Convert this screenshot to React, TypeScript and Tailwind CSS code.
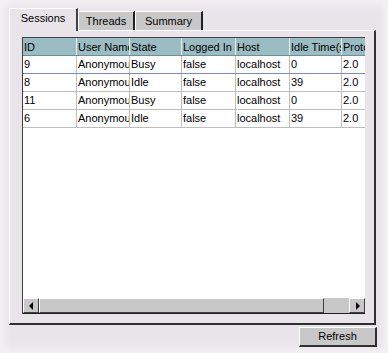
import React from "react";

const cols = [
  { name: "ID", w: "w-[54px]" },
  { name: "User Name", w: "w-[53px]" },
  { name: "State", w: "w-[52px]" },
  { name: "Logged In", w: "w-[54px]" },
  { name: "Host", w: "w-[54px]" },
  { name: "Idle Time(s)", w: "w-[52px]" },
  { name: "Protocol", w: "w-[40px]" },
];

const rows = [
  ["9", "Anonymous", "Busy", "false", "localhost", "0", "2.0"],
  ["8", "Anonymous", "Idle", "false", "localhost", "39", "2.0"],
  ["11", "Anonymous", "Busy", "false", "localhost", "0", "2.0"],
  ["6", "Anonymous", "Idle", "false", "localhost", "39", "2.0"],
];

function Tab({ label, active, w }: { label: string; active?: boolean; w: string }) {
  return active ? (
    <div
      className={`${w} h-[23px] bg-[#e9e4e9] border-l border-t border-white border-r-2 border-r-[#404040] flex items-center justify-center relative z-10 -mb-px`}
    >
      <span className="-mt-[3px]">{label}</span>
    </div>
  ) : (
    <div
      className={`${w} h-[19px] mt-[3px] bg-[#c8c8c8] border-l border-t border-white border-r-2 border-r-[#202020] flex items-center justify-center`}
    >
      {label}
    </div>
  );
}

function ArrowBtn({ dir }: { dir: "l" | "r" }) {
  return (
    <div className="w-[16px] h-full bg-[#c8c8c8] border-t border-l border-white border-r border-b border-r-[#404040] border-b-[#404040] flex items-center justify-center">
      <svg width="5" height="8" viewBox="0 0 5 8">
        {dir === "l" ? <polygon points="4,0 4,8 0,4" fill="#000" /> : <polygon points="1,0 1,8 5,4" fill="#000" />}
      </svg>
    </div>
  );
}

export default function App() {
  return (
    <div
      className="w-[388px] h-[353px] bg-[#e9e4e9] text-[11px] text-black overflow-hidden pt-[8px] pl-[9px]"
      style={{ fontFamily: '"Liberation Sans", Arial, sans-serif', boxShadow: "inset 0 0 8px 4px #f6f2f6" }}
    >
      <div className="flex">
        <Tab label="Sessions" active w="w-[69px]" />
        <Tab label="Threads" w="w-[57px]" />
        <Tab label="Summary" w="w-[68px]" />
      </div>
      <div className="w-[367px] h-[295px] border-l border-t border-white border-r-2 border-b-2 border-r-[#303030] border-b-[#303030] pl-[12px] pt-[6px]">
        <div className="w-[343px] h-[277px] bg-white border-t border-l border-[#404040] flex flex-col">
          <div className="flex-1 overflow-hidden">
            <div className="flex h-[18px] bg-[#9bbcc2] border-b border-[#6f8f96]">
              {cols.map((c, i) => (
                <div
                  key={i}
                  className={`${c.w} shrink-0 border-r border-[#e6f0f2] pl-[1px] leading-[18px] whitespace-nowrap overflow-hidden`}
                >
                  {c.name}
                </div>
              ))}
            </div>
            {rows.map((r, ri) => (
              <div
                key={ri}
                className={`flex h-[18px] border-b ${ri === 0 ? "border-[#7a8cc8]" : "border-[#bdbdbd]"}`}
              >
                {r.map((v, ci) => (
                  <div
                    key={ci}
                    className={`${cols[ci].w} shrink-0 border-r border-[#bdbdbd] pl-[1px] leading-[17px] whitespace-nowrap overflow-hidden`}
                  >
                    {v}
                  </div>
                ))}
              </div>
            ))}
          </div>
          <div className="h-[16px] flex bg-[#c8c8c8] border-b border-[#202020]">
            <ArrowBtn dir="l" />
            <div className="w-[285px] h-full bg-[#c8c8c8] border-t border-l border-white border-r border-b border-r-[#404040] border-b-[#404040]" />
            <div className="flex-1" />
            <ArrowBtn dir="r" />
          </div>
        </div>
      </div>
      <div className="flex justify-end w-[368px] mt-[2px]">
        <div className="w-[78px] h-[20px] bg-[#c8c8c8] border-t border-l border-white border-r-2 border-b-2 border-r-[#303030] border-b-[#303030] flex items-center justify-center">
          Refresh
        </div>
      </div>
    </div>
  );
}
